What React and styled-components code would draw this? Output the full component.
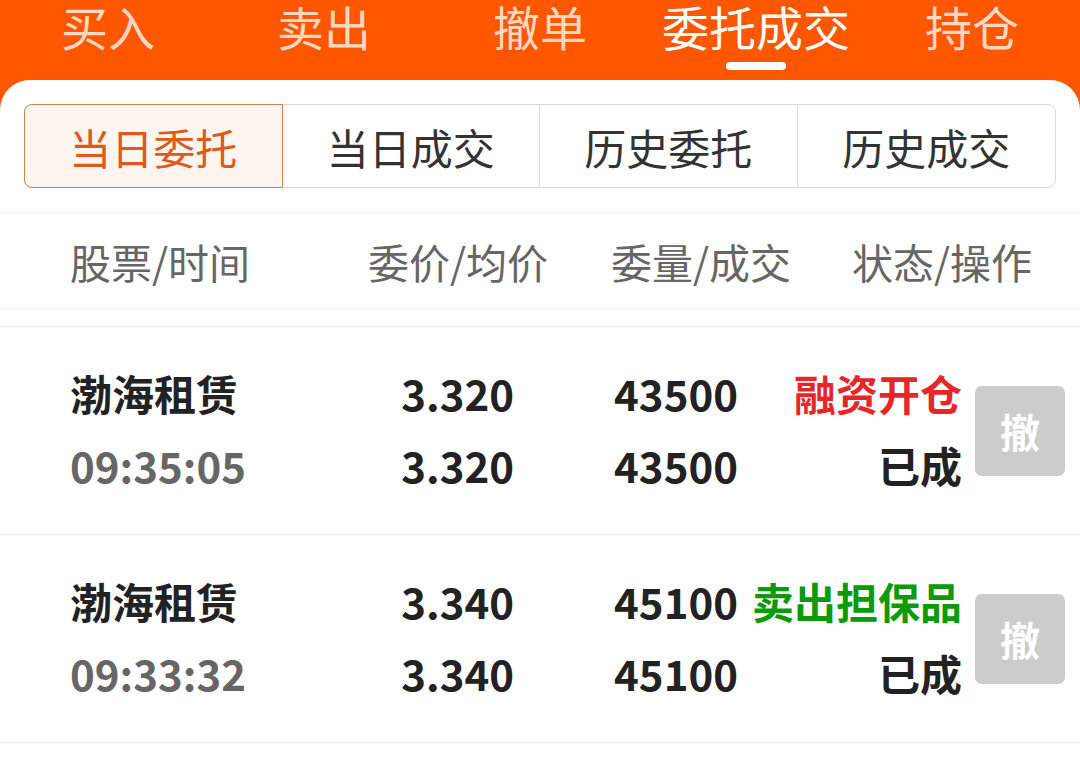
import React from "react";
import styled, { createGlobalStyle } from "styled-components";

const Global = createGlobalStyle`
  html, body { margin: 0; padding: 0; background: #ff5600; }
  body { font-family: "Noto Sans CJK SC", "Noto Sans", sans-serif; }
  * { box-sizing: border-box; }
`;

const Page = styled.div`
  width: 1080px;
  height: 764px;
  overflow: hidden;
  background: #ff5600;
  display: flex;
  flex-direction: column;
`;

const TopNav = styled.div`
  height: 80px;
  display: grid;
  grid-template-columns: repeat(5, 1fr);
  flex-shrink: 0;
`;

const NavItem = styled.div`
  position: relative;
  display: flex;
  justify-content: center;
  font-size: 47px;
  line-height: 52px;
  color: ${(p) => (p.$active ? "#ffffff" : "#ffd8c2")};
`;

const Indicator = styled.span`
  position: absolute;
  left: 50%;
  top: 62px;
  width: 60px;
  height: 8px;
  margin-left: -30px;
  border-radius: 5px;
  background: #ffffff;
`;

const Card = styled.div`
  flex: 1;
  background: #ffffff;
  border-radius: 30px 30px 0 0;
  padding-top: 24px;
`;

const Segments = styled.div`
  margin: 0 24px;
  height: 84px;
  display: grid;
  grid-template-columns: repeat(4, 1fr);
  border: 1px solid #d9d9d9;
  border-radius: 8px;
`;

const Segment = styled.div`
  display: flex;
  align-items: center;
  justify-content: center;
  font-size: 42px;
  color: ${(p) => (p.$active ? "#e0581a" : "#333333")};
  background: ${(p) => (p.$active ? "#fff5f0" : "transparent")};
  border-right: 1px solid #d9d9d9;
  ${(p) =>
    p.$active &&
    `margin: -1px 0 -1px -1px; border: 1px solid #d2814a; border-radius: 8px 0 0 8px;`}
  &:last-child { border-right: none; }
`;

const HeaderRow = styled.div`
  margin-top: 24px;
  height: 97px;
  border-top: 1px solid #f0f0f0;
  border-bottom: 1px solid #ececec;
  display: grid;
  grid-template-columns: 298px 243px 241px 1fr;
  align-items: center;
  padding-left: 70px;
  font-size: 41px;
  color: #666666;
`;

const List = styled.div`
  margin-top: 17px;
  border-top: 1px solid #ececec;
`;

const Row = styled.div`
  height: 208px;
  border-bottom: 1px solid #ececec;
  display: grid;
  grid-template-columns: 300px 144px 224px 224px 103px;
  align-items: center;
  padding-left: 70px;
  padding-right: 15px;
`;

const Cell = styled.div`
  display: flex;
  flex-direction: column;
  align-items: ${(p) => (p.$right ? "flex-end" : "flex-start")};
  white-space: nowrap;
  padding-bottom: 4px;
`;

const Line = styled.div`
  font-size: 42px;
  line-height: 72px;
  font-weight: 700;
  color: ${(p) => p.$color || "#222222"};
`;

const CancelButton = styled.div`
  justify-self: end;
  width: 90px;
  height: 90px;
  border-radius: 7px;
  background: #cccccc;
  color: #ffffff;
  font-size: 40px;
  font-weight: 700;
  display: flex;
  align-items: center;
  justify-content: center;
`;

const tabs = ["买入", "卖出", "撤单", "委托成交", "持仓"];
const segs = ["当日委托", "当日成交", "历史委托", "历史成交"];
const rows = [
  { name: "渤海租赁", time: "09:35:05", p1: "3.320", p2: "3.320", v1: "43500", v2: "43500", type: "融资开仓", color: "#e8262a", status: "已成" },
  { name: "渤海租赁", time: "09:33:32", p1: "3.340", p2: "3.340", v1: "45100", v2: "45100", type: "卖出担保品", color: "#0a9a0a", status: "已成" },
];

export default function App() {
  return (
    <Page>
      <Global />
      <TopNav>
        {tabs.map((t, i) => (
          <NavItem key={t} $active={i === 3}>
            {t}
            {i === 3 && <Indicator />}
          </NavItem>
        ))}
      </TopNav>
      <Card>
        <Segments>
          {segs.map((s, i) => (
            <Segment key={s} $active={i === 0}>{s}</Segment>
          ))}
        </Segments>
        <HeaderRow>
          <span>股票/时间</span>
          <span>委价/均价</span>
          <span>委量/成交</span>
          <span>状态/操作</span>
        </HeaderRow>
        <List>
          {rows.map((r, i) => (
            <Row key={i}>
              <Cell>
                <Line>{r.name}</Line>
                <Line $color="#666666">{r.time}</Line>
              </Cell>
              <Cell $right>
                <Line>{r.p1}</Line>
                <Line>{r.p2}</Line>
              </Cell>
              <Cell $right>
                <Line>{r.v1}</Line>
                <Line>{r.v2}</Line>
              </Cell>
              <Cell $right>
                <Line $color={r.color}>{r.type}</Line>
                <Line>{r.status}</Line>
              </Cell>
              <CancelButton>撤</CancelButton>
            </Row>
          ))}
        </List>
      </Card>
    </Page>
  );
}
